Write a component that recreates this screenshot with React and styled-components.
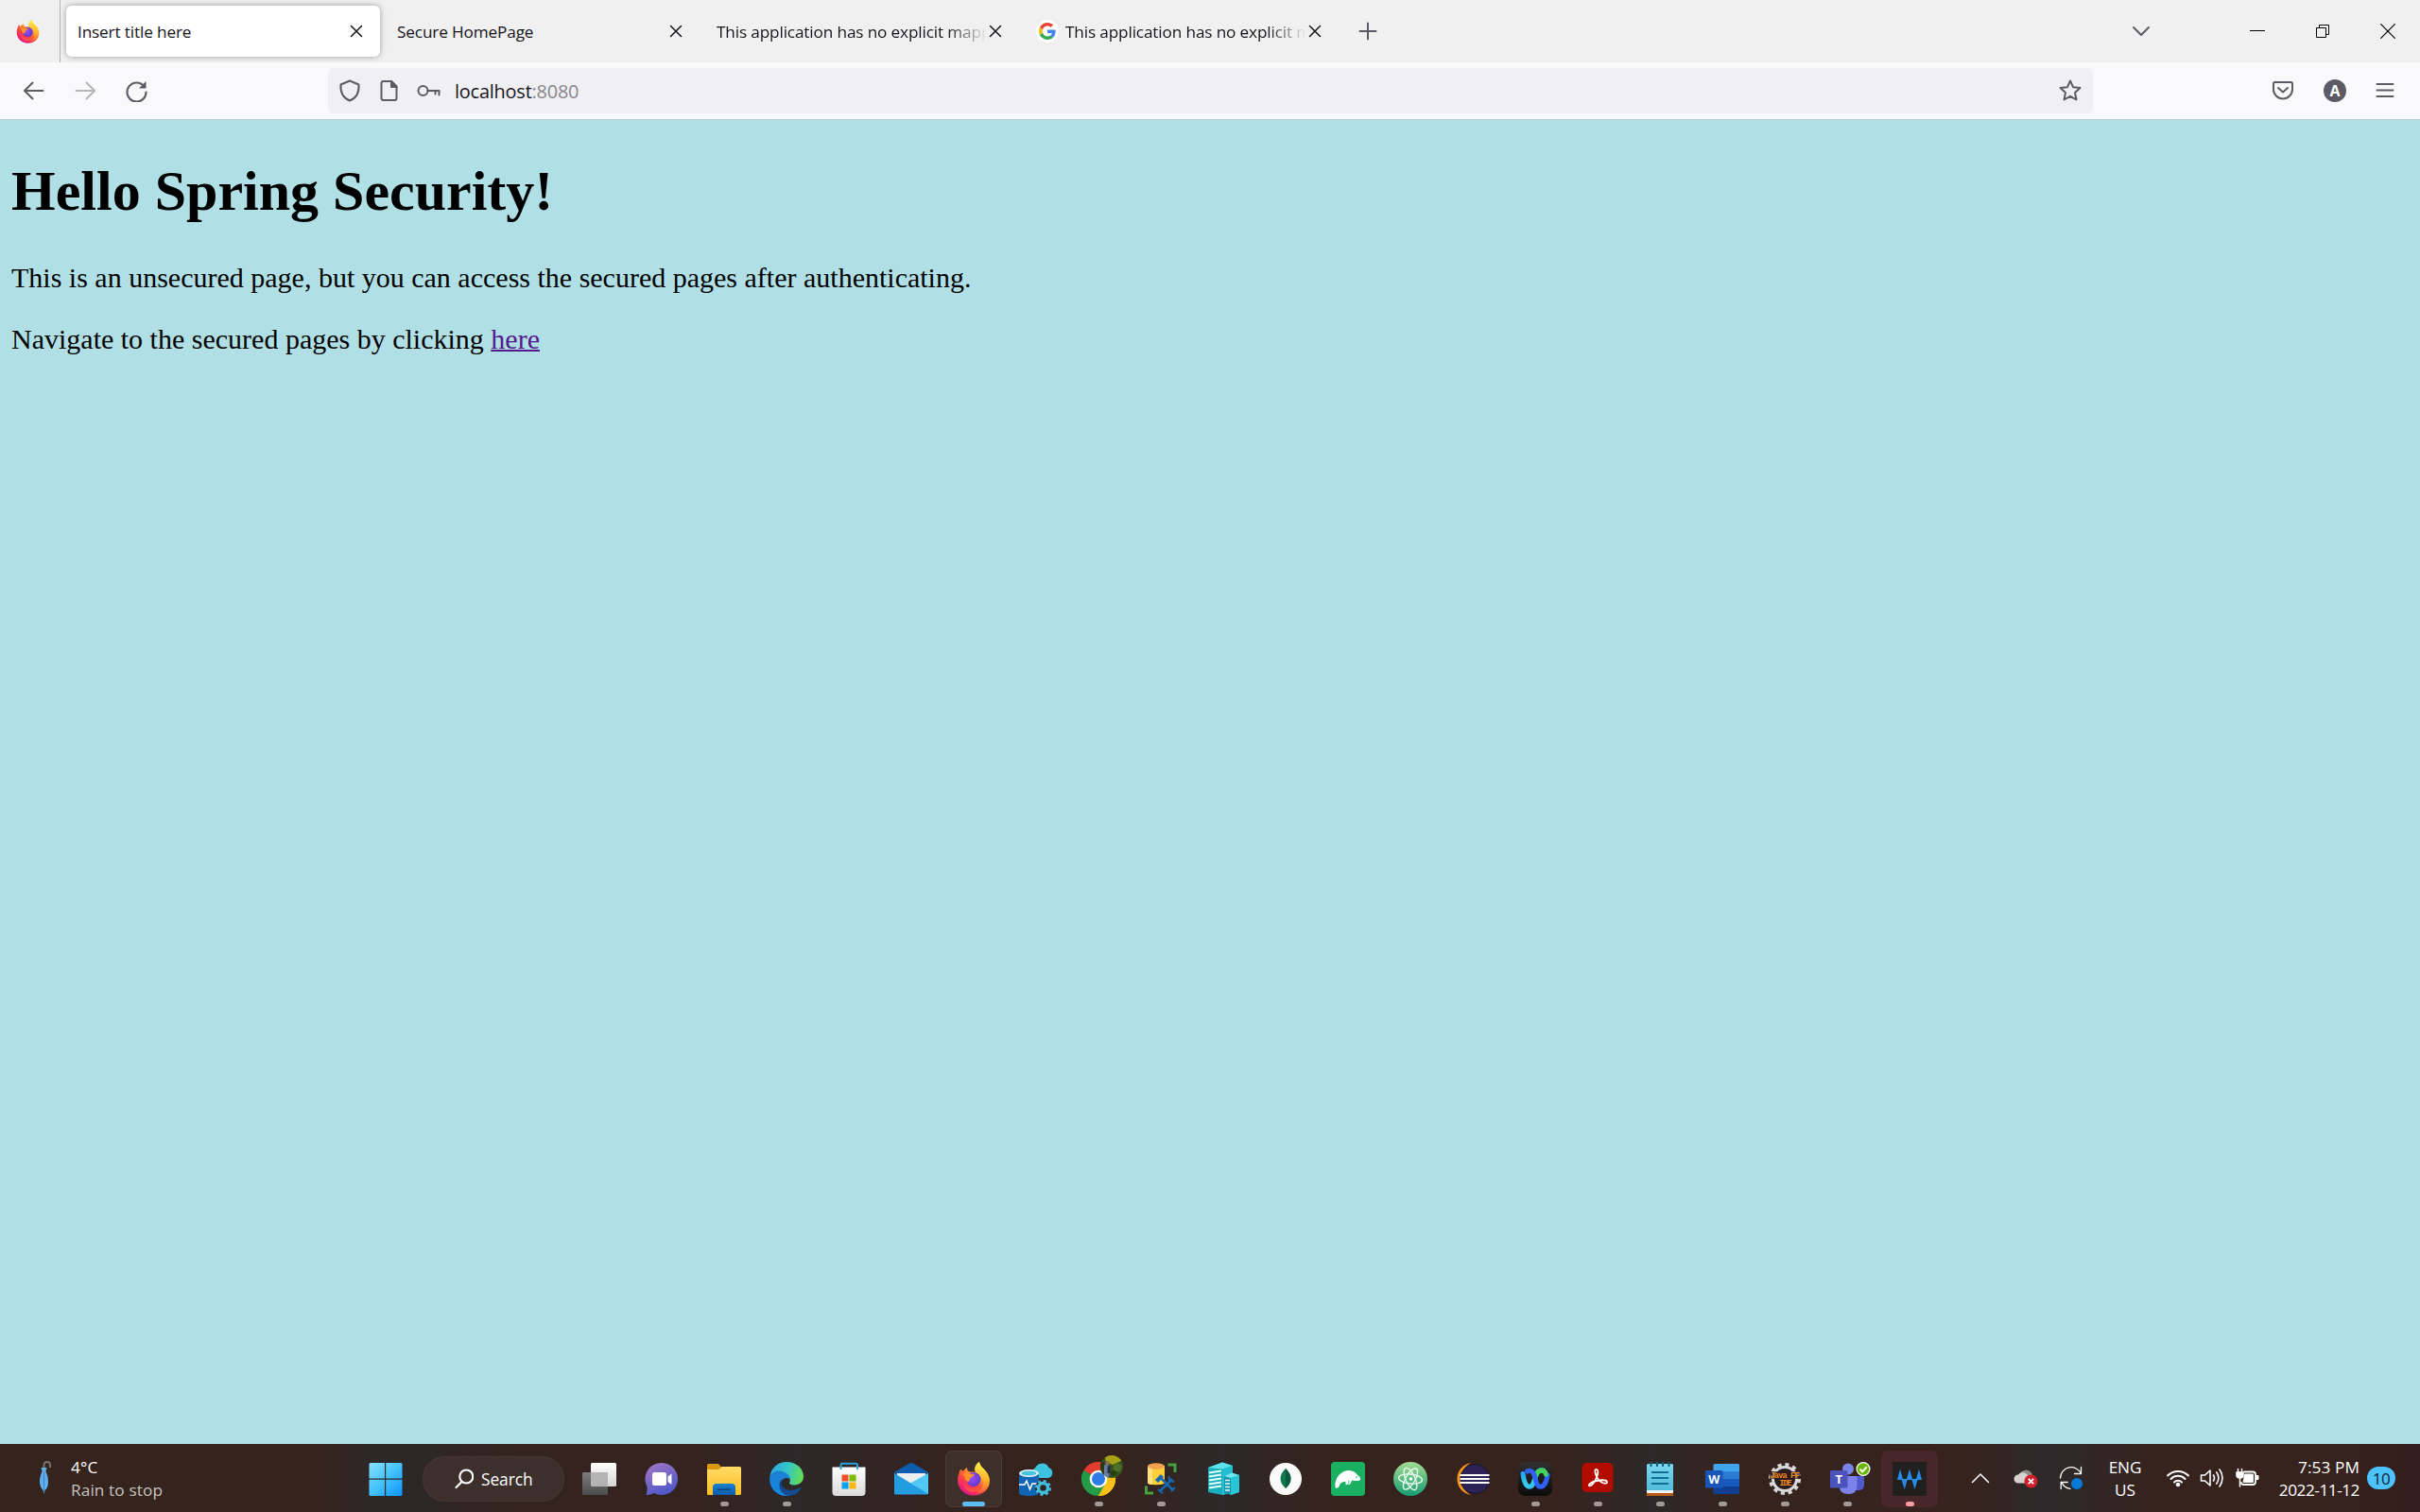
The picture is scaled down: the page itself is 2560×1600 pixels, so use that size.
import React from "react";
import styled, { createGlobalStyle } from "styled-components";

const Global = createGlobalStyle`
  html, body { margin: 0; padding: 0; }
  body { width: 2560px; height: 1600px; overflow: hidden; background: #b0e0e6; }
  svg { display: block; flex: none; }
`;

const ui = `"Open Sans", "Noto Sans", sans-serif`;

const Screen = styled.div`
  width: 2560px;
  height: 1600px;
  display: flex;
  flex-direction: column;
  font-family: ${ui};
`;

/* ---------- browser chrome ---------- */
const TabStrip = styled.div`
  height: 66px;
  background: #f0f0f0;
  display: flex;
  align-items: center;
`;
const ViewButton = styled.div`
  box-sizing: border-box;
  width: 64px;
  height: 66px;
  padding-left: 17px;
  display: flex;
  align-items: center;
  border-right: 1px solid #b3b3b3;
  margin-right: 6px;
`;
const Tab = styled.div`
  box-sizing: border-box;
  width: 332px;
  height: 54px;
  margin-right: 6px;
  padding: 0 16px 0 12px;
  border-radius: 6px;
  display: flex;
  align-items: center;
  background: ${(p) => (p.$active ? "#fff" : "transparent")};
  box-shadow: ${(p) => (p.$active ? "0 0 6px rgba(90,90,90,.55)" : "none")};
`;
const TabTitle = styled.span`
  flex: 1;
  min-width: 0;
  overflow: hidden;
  white-space: nowrap;
  font-size: 17.2px;
  letter-spacing: -0.14px;
  line-height: 26px;
  padding-top: 2px;
  color: #15141a;
  margin-left: ${(p) => (p.$icon ? "7px" : "0")};
  mask-image: ${(p) => (p.$fade ? "linear-gradient(to left, transparent 0, #000 42px)" : "none")};
`;
const TabClose = styled.div`
  width: 18px;
  display: flex;
  justify-content: center;
`;
const NewTab = styled.div`
  width: 60px;
  display: flex;
  justify-content: center;
  margin-left: -5px;
`;
const WindowButtons = styled.div`
  margin-left: auto;
  display: flex;
  align-items: center;
`;
const WindowButton = styled.div`
  width: ${(p) => p.$w}px;
  margin-right: ${(p) => p.$gap || 0}px;
  display: flex;
  justify-content: center;
`;

const NavBar = styled.div`
  box-sizing: border-box;
  height: 61px;
  background: #f9f9fb;
  border-bottom: 1px solid #bccdd2;
  display: flex;
  align-items: center;
`;
const NavGroup = styled.div`
  display: flex;
  align-items: center;
  width: 347px;
  gap: 30px;
  box-sizing: border-box;
  padding-left: 24px;
`;
const UrlBar = styled.div`
  box-sizing: border-box;
  width: 1867px;
  height: 48px;
  padding: 0 12px 0 11px;
  border-radius: 6px;
  background: #f0f0f4;
  display: flex;
  align-items: center;
`;
const UrlIcons = styled.div`
  display: flex;
  align-items: center;
  gap: 19px;
  margin-right: 15px;
`;
const UrlText = styled.span`
  flex: 1;
  font-size: 19.9px;
  letter-spacing: -0.2px;
  line-height: 30px;
  padding-top: 2px;
  color: #15141a;
`;
const Port = styled.span`
  color: #87868c;
`;
const NavActions = styled.div`
  margin-left: auto;
  display: flex;
  align-items: center;
  gap: 31px;
  padding-right: 27px;
`;
const Avatar = styled.div`
  width: 24px;
  height: 24px;
  border-radius: 50%;
  background: #5b5b66;
  color: #fff;
  font: 700 16px/25px ${ui};
  text-align: center;
`;

/* ---------- page ---------- */
const Page = styled.main`
  flex: 1;
  background: #b0e0e6;
  padding: 0 12px;
  display: flow-root;
  font-family: "Liberation Serif", "Times New Roman", serif;
  font-size: 30px;
  line-height: 35px;
  color: #000;
`;
const Heading = styled.h1`
  margin: 41px 0 39px;
  font-size: 60px;
  line-height: 69px;
  font-weight: 700;
`;
const Paragraph = styled.p`
  margin: 30px 0;
`;
const Link = styled.a`
  color: #551a8b;
  text-decoration: underline;
  text-decoration-thickness: 1.5px;
`;

/* ---------- taskbar ---------- */
const TaskBar = styled.footer`
  height: 72px;
  display: flex;
  align-items: center;
  color: #fff;
  background: linear-gradient(
    90deg,
    #35231c 0, #35231e 340px, #2b2828 400px, #2d2727 450px, #34231f 540px,
    #34221e 740px, #2d2829 840px, #34221e 1000px, #36231d 1180px, #2d2829 1290px,
    #36221d 1410px, #37231d 1640px, #2d2829 1750px, #37231d 1850px, #37231d 2080px,
    #2d292b 2160px, #37231d 2290px, #36231e 2460px, #351d1d 2560px
  );
`;
const Weather = styled.div`
  box-sizing: border-box;
  width: 375px;
  padding-left: 39px;
  display: flex;
  align-items: center;
  gap: 20px;
`;
const Lines = styled.div`
  display: flex;
  flex-direction: column;
  align-items: ${(p) => p.$align || "flex-start"};
  padding-top: 2px;
  font-size: 17.2px;
  line-height: 24px;
  letter-spacing: ${(p) => p.$spacing || "-0.1px"};
  width: ${(p) => p.$w || "auto"};
  white-space: nowrap;
`;
const Muted = styled.span`
  color: #c9c3c1;
`;
const ClockDate = styled.span`
  letter-spacing: -0.45px;
`;
const Cell = styled.div`
  box-sizing: border-box;
  width: 60px;
  height: 60px;
  margin: 2px 3px 0;
  padding-top: 12px;
  border-radius: 7px;
  display: flex;
  flex-direction: column;
  align-items: center;
  background: ${(p) => (p.$tone === "active" ? "#3f2f2b" : p.$tone === "alert" ? "#48262a" : "transparent")};
  box-shadow: ${(p) => (p.$tone === "active" ? "inset 0 0 0 1px #4b3a36" : "none")};
`;
const Dot = styled.div`
  width: ${(p) => (p.$tone === "active" ? 24 : 9)}px;
  height: 5px;
  margin-top: 6px;
  border-radius: 3px;
  background: ${(p) => (p.$tone === "active" ? "#5cbcf5" : p.$tone === "alert" ? "#ff9ba6" : "#a39a97")};
`;
const SearchPill = styled.div`
  box-sizing: border-box;
  width: 150px;
  height: 48px;
  margin: 2px 4px 0 6px;
  padding-left: 34px;
  border-radius: 24px;
  display: flex;
  align-items: center;
  gap: 8px;
  background: #3d2f2c;
  box-shadow: inset 0 0 0 1px #453733;
  font-size: 17.4px;
  letter-spacing: -0.1px;
`;
const Tray = styled.div`
  display: flex;
  align-items: center;
  margin-left: auto;
  padding-right: 26px;
`;
const TrayItem = styled.div`
  width: ${(p) => p.$w}px;
  margin-right: ${(p) => p.$gap || 0}px;
  display: flex;
  justify-content: center;
`;
const Badge = styled.div`
  width: 30px;
  height: 24px;
  margin-left: 8px;
  border-radius: 12px;
  background: #4cc2ff;
  color: #10222d;
  font-size: 17px;
  letter-spacing: -0.4px;
  line-height: 25px;
  text-align: center;
`;

/* ---------- line icons ---------- */
const Line = ({ w = 24, h = 24, c = "#5b5b66", s = 2, children }) => (
  <svg width={w} height={h} viewBox={`0 0 ${w} ${h}`} fill="none" stroke={c} strokeWidth={s} strokeLinecap="round" strokeLinejoin="round">
    {children}
  </svg>
);
const Cross = () => (
  <Line w={14} h={14} c="#15141a" s={1.5}><path d="M1.500 1.500l11 11M12.500 1.500l-11 11" /></Line>
);

const FirefoxLogo = ({ size = 36, id }) => (
  <svg width={size} height={size} viewBox="0 0 36 36">
    <defs>
      <linearGradient id={id + "a"} x1=".85" y1=".05" x2=".25" y2=".95">
        <stop offset="0" stopColor="#fff44f" /><stop offset=".35" stopColor="#ffa32c" />
        <stop offset=".65" stopColor="#ff4a3d" /><stop offset="1" stopColor="#e31587" />
      </linearGradient>
      <linearGradient id={id + "c"} x1=".5" y1="0" x2=".5" y2="1">
        <stop offset="0" stopColor="#fff34a" /><stop offset=".6" stopColor="#ffb52b" /><stop offset="1" stopColor="#ff6a35" />
      </linearGradient>
      <radialGradient id={id + "b"} cx=".4" cy=".4" r=".7">
        <stop offset="0" stopColor="#9a4ff5" /><stop offset="1" stopColor="#5a34c6" />
      </radialGradient>
    </defs>
    <path d="M4 8c1 0 2 1 3 2 1-2 2.500-3 4-4 0 2 .8 3.500 2.500 4.500H20C19 6 20.500 2 24 0c.6 4.500 4 6 6.500 9.500C33 12 35 16 35 20c0 9-7.500 15.500-17 15.500S1 28.500 1 19.500C1 15 2.500 11 4 8z" fill={`url(#${id}a)`} />
    <path d="M19 9C18.500 5.500 20.500 2 24 0c.6 4.500 4 6 6.500 9.500 5 6 5 14 .5 19.500-3 3.500-7 4-10 3 6-3 8-8 6-13-1.500-4-5-6-8-10z" fill={`url(#${id}c)`} opacity=".8" />
    <circle cx="18" cy="18.500" r="7.500" fill={`url(#${id}b)`} />
    <path d="M6 13c3-2 6-2 8-.5 2 .3 4 .3 5 .5-.5 2-3 2.500-4.500 4-1 1 0 2.500-1.500 3.500-2 1-3-1-4-2.500-.5-2-1-4-3-5z" fill="#ff9328" />
    <path d="M7 20c1 7 8 9.500 13 7.500 3-1.200 4.500-2.500 5.500-5 .5 6-4 10-9.500 9.500-5.500-.4-9-5-9-12z" fill="#ff5b3b" opacity=".7" />
  </svg>
);

const GoogleLogo = () => (
  <svg width="24" height="24" viewBox="0 0 24 24">
    <circle cx="12" cy="12" r="12" fill="#fff" />
    <g transform="translate(3 3) scale(.375)">
      <path fill="#EA4335" d="M24 9.500c3.540 0 6.710 1.220 9.210 3.600l6.850-6.850C35.900 2.380 30.470 0 24 0 14.620 0 6.510 5.380 2.560 13.220l7.980 6.190C12.430 13.720 17.740 9.500 24 9.500z" />
      <path fill="#4285F4" d="M46.980 24.550c0-1.570-.15-3.090-.38-4.550H24v9.020h12.940c-.58 2.960-2.260 5.480-4.780 7.180l7.730 6c4.510-4.180 7.090-10.360 7.090-17.650z" />
      <path fill="#FBBC05" d="M10.530 28.590c-.48-1.450-.76-2.990-.76-4.590s.27-3.140.76-4.590l-7.980-6.190C.92 16.460 0 20.120 0 24s.92 7.540 2.560 10.780l7.970-6.190z" />
      <path fill="#34A853" d="M24 48c6.480 0 11.930-2.130 15.890-5.810l-7.730-6c-2.150 1.450-4.920 2.300-8.160 2.300-6.260 0-11.570-4.220-13.470-9.910l-7.980 6.190C6.510 42.620 14.620 48 24 48z" />
    </g>
  </svg>
);

/* ---------- taskbar icons ---------- */
const Icon = ({ children }) => <svg width="36" height="36" viewBox="0 0 36 36">{children}</svg>;
const Grad = ({ id, from, to, x2 = 0, y2 = 1 }) => (
  <linearGradient id={id} x1="0" y1="0" x2={x2} y2={y2}>
    <stop offset="0" stopColor={from} /><stop offset="1" stopColor={to} />
  </linearGradient>
);

const StartIcon = () => (
  <Icon>
    <defs><linearGradient id="win" gradientUnits="userSpaceOnUse" x1="0" y1="0" x2="36" y2="36">
      <stop offset="0" stopColor="#8be2ff" /><stop offset=".5" stopColor="#45c3fb" /><stop offset="1" stopColor="#0a93ff" />
    </linearGradient></defs>
    <path fill="url(#win)" d="M2 1h15v16.500H.5V2.500Q.5 1 2 1zM18.200 1H34q1.500 0 1.500 1.500v15H18.200zM.5 18.700H17V36H2q-1.500 0-1.500-1.500zM18.200 18.700h17.300v15.800Q35.500 36 34 36H18.200z" />
  </Icon>
);
const TaskViewIcon = () => (
  <Icon>
    <defs><Grad id="tv1" from="#fff" to="#d5d5d5" /><Grad id="tv2" from="#7d7c7c" to="#4c4c4c" /></defs>
    <rect x="9" y="1" width="27" height="25" rx="1.500" fill="url(#tv1)" />
    <rect x="0" y="11" width="27" height="24" rx="1.500" fill="url(#tv2)" />
    <path d="M9 11h18v15H10.500Q9 26 9 24.500z" fill="#b5b4b4" />
  </Icon>
);
const ChatIcon = () => (
  <Icon>
    <defs><Grad id="chat" from="#a778c4" to="#5059c9" x2={0.5} /></defs>
    <path d="M18 1a17 17 0 1 1-8 32c-3 1.500-6 2-8.500 2C1.500 34.500 3 31 2.500 26A17 17 0 0 1 18 1z" fill="url(#chat)" />
    <rect x="8" y="11" width="15" height="14" rx="2.500" fill="#fff" /><path d="M24.500 15.500l4-3v11.500l-4-3z" fill="#fff" />
  </Icon>
);
const ExplorerIcon = () => (
  <Icon>
    <defs><Grad id="fold" from="#ffdc66" to="#fbbf24" /><Grad id="foldb" from="#1a80cf" to="#0c5da8" /></defs>
    <path d="M0 3.500Q0 2 1.500 2h10.500l3 3.500-3 3.500H0z" fill="#d99a11" />
    <path d="M0 8h12l3.500-3H34.500Q36 5 36 6.500V33.500Q36 35 34.500 35H1.500Q0 35 0 33.500z" fill="url(#fold)" />
    <path d="M6 35V27q0-4 4-4h16q4 0 4 4v8z" fill="url(#foldb)" /><rect x="11" y="28.500" width="14" height="1.500" rx=".75" fill="#0a467e" />
  </Icon>
);
const EdgeIcon = () => (
  <Icon>
    <defs>
      <linearGradient id="e1" x1="0" y1=".3" x2="1" y2=".5"><stop offset="0" stopColor="#2aa5df" /><stop offset=".5" stopColor="#33c6c8" /><stop offset="1" stopColor="#64dd52" /></linearGradient>
      <Grad id="e2" from="#1c7fd0" to="#1389e4" /><Grad id="e3" from="#173f7b" to="#144f96" />
    </defs>
    <path d="M.5 15C2 6 9 0 18 0c10.500 0 18 7 18 15.500 0 5.500-4.500 9-9.500 9-4 0-6.500-1.500-5-3.500C23 18.500 20 12 12 11 7 10.500 2.500 12 .5 15z" fill="url(#e1)" />
    <path d="M.2 16C3 9.500 10 8.500 15 10.500c4 1.500 7 4.500 7 8-5-4-10.500 0-10 6 .3 5 5 9.500 10 11C10 38-1 29 .2 16z" fill="url(#e2)" />
    <path d="M13 18c-2.500 8 4.500 13.500 13 11.500 3-.7 5-1.500 7-2.500.8 0 1 .5.500 1.300C30 33.500 24 36.500 18 35.500 10 32 8.500 23 13 18z" fill="url(#e3)" />
  </Icon>
);
const StoreIcon = () => (
  <Icon>
    <defs><Grad id="st" from="#fff" to="#dadada" /></defs>
    <path d="M.5 5.500h35V32q0 4-4 4h-27q-4 0-4-4z" fill="url(#st)" />
    <path d="M9.500 8V3Q9.500 1.700 11 1.700H25.500q1.500 0 1.500 1.300V8" fill="none" stroke="#27a4dc" strokeWidth="2" />
    <path d="M10.500 13.500H17.500V20.500H10.500z" fill="#f0502a" /><path d="M18.500 13.500h7v7h-7z" fill="#7eb900" /><path d="M10.500 21.500h7v7h-7z" fill="#00a2ed" /><path d="M18.500 21.500h7v7h-7z" fill="#fdb80f" />
  </Icon>
);
const MailIcon = () => (
  <Icon>
    <path d="M0 11L16.500 1.300q1.500-.8 3 0L36 11v4H0z" fill="#0d5cad" />
    <path d="M3 12h30v12L18 27 3 24z" fill="#eee" /><path d="M0 12L36 33.500Q35.500 34.500 34 34.500H1.500Q0 34.500 0 33z" fill="#249ce2" /><path d="M36 12L17 22.500 36 34z" fill="#50c8f5" />
  </Icon>
);
const AzureDbIcon = () => (
  <Icon>
    <path d="M18 17a5.500 5.500 0 0 1-1-10.500A8 8 0 0 1 31.500 6 5.800 5.800 0 0 1 31 17z" fill="#3cc3e0" />
    <path d="M0 12v21c0 4 21 4 21 0V12z" fill="#1165b5" /><ellipse cx="10.500" cy="12" rx="10.500" ry="4" fill="#e6f3f7" /><ellipse cx="10.500" cy="12" rx="8" ry="2.500" fill="#45c4e0" />
    <path d="M0 24h6l2-4 3.500 9 2.500-6h6" fill="none" stroke="#fff" strokeWidth="1.500" />
    <circle cx="25.500" cy="27.500" r="8.500" fill="#322321" /><circle cx="25.500" cy="27.500" r="5" fill="none" stroke="#42bdde" strokeWidth="3.500" />
    <circle cx="25.500" cy="27.500" r="7.300" fill="none" stroke="#42bdde" strokeWidth="2.500" strokeDasharray="3 2.730" />
  </Icon>
);
const ChromeIcon = () => (
  <svg width="36" height="36" viewBox="0 0 36 36" overflow="visible">
    <path d="M18 18L2.400 9A18 18 0 0 1 33.600 9z" fill="#e33b2e" /><path d="M18 18L2.400 9A18 18 0 0 0 18 36l8-13.500z" fill="#259b48" />
    <path d="M18 18V9h15.600A18 18 0 0 1 18 36z" fill="#fbc116" /><path d="M18 18L10.500 22 18 36l7.800-13.500z" fill="#259b48" />
    <path d="M18 36l7.800-13.500V15L36 18A18 18 0 0 1 18 36z" fill="#fbc116" />
    <circle cx="18" cy="18" r="9.300" fill="#fff" /><circle cx="18" cy="18" r="7" fill="#2f7be6" />
    <clipPath id="ava"><circle cx="32" cy="5" r="12" /></clipPath>
    <g clipPath="url(#ava)">
      <path d="M20-7h24v24H20z" fill="#31521d" /><path d="M24-7h18v6l-9 4-7-3z" fill="#a9a116" /><circle cx="38" cy="6" r="4.500" fill="#4d7125" />
      <circle cx="34" cy="12" r="3" fill="#23400f" /><path d="M20 0h4v17h-4z" fill="#263a19" /><path d="M24 4q4-4 6 1l-1 12h-5z" fill="#6b7d9e" />
      <circle cx="27.500" cy="1" r="2.200" fill="#8d6c60" /><path d="M27.500 4h3v8h-3z" fill="#292d46" />
    </g>
  </svg>
);
const SqlToolsIcon = () => (
  <Icon>
    <path d="M4 4v18c0 3 18 3 18 0V4z" fill="#fbcf37" /><path d="M4 4v18c0 1 2 2 5 2V5z" fill="#ffe180" /><ellipse cx="13" cy="4.500" rx="9" ry="3.200" fill="#f1a04d" />
    <path d="M25.500 3H33v8M2.500 25.500V33H10" fill="none" stroke="#46a03c" strokeWidth="3" />
    <path d="M17 16l14 14M30 18L17 31" stroke="#1569b2" strokeWidth="2.600" /><path d="M13.500 20.500l6-6" stroke="#1569b2" strokeWidth="4.500" /><path d="M27 15q-2 5 5 6M15 29l5 4M29 31l4-4" stroke="#1569b2" strokeWidth="2" fill="none" />
  </Icon>
);
const ServersIcon = () => (
  <Icon>
    <path d="M2 6L17 .5 28 4v28l-11 3-15-3z" fill="#19aebc" /><path d="M2 6L17 .5 28 4l-11 3.500z" fill="#5ee3ed" /><path d="M17 7.500L28 4v28l-11 3z" fill="#22bfd0" />
    <path d="M3 11.500l13-2M3 15.500l13-2M3 19.500l13-2M3 23.500l13-2M3 27.500l13-2" stroke="#e6ffff" strokeWidth="1.900" />
    <path d="M19 15l8-3.500 8 2.500v18l-9 3-7-2z" fill="#1396ae" /><path d="M19 15l8-3.500 8 2.500-9 3z" fill="#70e7ef" /><path d="M26 17l9-3v18l-9 3z" fill="#28c7d8" />
    <path d="M20 19.500h5M20 23h5M20 26.500h5M20 30h5" stroke="#e6ffff" strokeWidth="1.600" />
  </Icon>
);
const MongoIcon = () => (
  <Icon><circle cx="18" cy="18" r="17" fill="#fafafa" /><path d="M18 7c4 4 5.500 7 5.500 11S21 25 18 28c-3-3-5.500-6-5.500-10S14 11 18 7z" fill="#10774e" /><path d="M18 7c4 4 5.500 7 5.500 11S21 25 18 28z" fill="#0a5b3e" /></Icon>
);
const ManateeIcon = () => (
  <Icon>
    <rect width="36" height="36" rx="4" fill="#1ab062" />
    <path d="M4.500 26.500c-.8-5 1.500-11 6-14.500C15 8 22 8 26 11.500c1.200 1.200 1.700 2.500 3 3.300 1.700 1 2.700 2.700 2 4-.8 1.500-3 1.200-5 1.200l-4-.5c-.5 2-1.500 4-3 4.700-.8.2-1-.4-.7-1.200-.7 1-2 1.600-2.800 1.200.3-1.500 0-2.700-.5-3.400-2 .2-4 .9-5.500 2.700-.5 2-1.500 4-3.500 4.300-.9.100-1.400-.5-1.500-1.300z" fill="#fff" />
    <circle cx="27" cy="16" r=".8" fill="#1ab062" />
    <path d="M18.500 19.500c.5 1.500.3 3-.3 4" fill="none" stroke="#1ab062" strokeWidth=".9" />
  </Icon>
);
const AtomIcon = () => (
  <Icon><defs><Grad id="atom" from="#a4db92" to="#159e71" /></defs><circle cx="18" cy="18" r="18" fill="url(#atom)" />
    <g fill="none" stroke="#eafaf0" strokeWidth="1.400"><ellipse cx="18" cy="18" rx="12.500" ry="5" transform="rotate(6 18 18)" /><ellipse cx="18" cy="18" rx="12.500" ry="5" transform="rotate(66 18 18)" /><ellipse cx="18" cy="18" rx="12.500" ry="5" transform="rotate(120 18 18)" /></g>
    <circle cx="18.500" cy="18" r="1.800" fill="#fff" /></Icon>
);
const EclipseIcon = () => (
  <Icon><path d="M16 1A17.200 17.200 0 0 0 16 35C9 31 6 25 6 18S9 5 16 1z" fill="#f7941e" /><circle cx="20.300" cy="18" r="15.500" fill="#2c2255" stroke="#17142e" />
    <path d="M4.500 14h31M4.500 18h31M4.500 22h31" stroke="#fff" strokeWidth="1.900" /></Icon>
);
const WebexIcon = () => (
  <Icon>
    <defs>
      <Grad id="wx" from="#303030" to="#0b0b0b" />
      <linearGradient id="wl" gradientUnits="userSpaceOnUse" x1="3" y1="9" x2="20" y2="27"><stop offset="0" stopColor="#1d9bf5" /><stop offset=".6" stopColor="#35cdea" /><stop offset="1" stopColor="#2fb4ee" /></linearGradient>
    </defs>
    <rect width="36" height="36" rx="7" fill="url(#wx)" />
    <path d="M5 12.500C6 21 8.500 26.200 12 26.200c4.500 0 5-8 7.500-13.500C21 9.500 24 8.500 26.500 9" fill="none" stroke="url(#wl)" strokeWidth="5" strokeLinecap="round" />
    <path d="M19.500 12.800C21 9.500 24 8.300 27 9.500c1.500.7 2 2 2.200 3.200" fill="none" stroke="#45d25b" strokeWidth="5" strokeLinecap="round" />
    <path d="M9.500 10c3-1.800 6-.5 7.500 4 1.800 5.500 2.500 12.200 6.500 12.200 4.500 0 6.500-6 7.500-12.200" fill="none" stroke="#2f62fb" strokeWidth="5" strokeLinecap="round" />
    <path d="M23 9.500c3-1 6 .5 6.500 4" fill="none" stroke="#45d25b" strokeWidth="4.600" strokeLinecap="round" />
  </Icon>
);
const AcrobatIcon = () => (
  <Icon><rect x="1.500" y="1" width="33" height="31" rx="5" fill="#b30b00" />
    <path d="M17 8c-2-.5-2 2-1 5 1 3.500 4 7.500 7 9 3 1.200 5.500.5 5-1-.5-1.300-4-2-8-1.500s-8 1.800-10 3.500c-2 1.500-1 3 1 2 2.500-1.500 5-6 6.500-10 1-3.500 1.500-6.500-.5-7z" fill="none" stroke="#fff" strokeWidth="1.800" /></Icon>
);
const NotepadIcon = () => (
  <Icon><path d="M4 29h28v7H4z" fill="#b45a12" /><path d="M4 28h28v5H4z" fill="#f2f2f2" /><defs><Grad id="np" from="#7ed7ee" to="#4fbcdb" /></defs><path d="M4 3.500Q4 2 5.500 2h25Q32 2 32 3.500V30H4z" fill="url(#np)" />
    <path d="M9 11h18M9 17h18M9 23h18" stroke="#136e95" strokeWidth="1.800" /><path d="M8.500 1v3M15 1v3M21 1v3M27.500 1v3" stroke="#115f80" strokeWidth="2.200" strokeLinecap="round" /></Icon>
);
const letter = { fontFamily: "Open Sans", fontWeight: 700, fill: "#fff", textAnchor: "middle" };
const WordIcon = () => (
  <Icon><path d="M8.500 10V3.500Q8.500 2 10 2H34.500Q36 2 36 3.500V10z" fill="#41a5ee" /><path d="M8.500 10H36v8H8.500z" fill="#2b7cd3" /><path d="M8.500 18H36v8H8.500z" fill="#185abd" /><path d="M8.500 26H36v6.500Q36 34 34.500 34H10Q8.500 34 8.500 32.500z" fill="#103f91" />
    <rect x="0" y="9" width="18.500" height="18.500" rx="1.500" fill="#1a56b9" /><text x="9.200" y="22.700" fontSize="12.500" {...letter}>W</text></Icon>
);
const JavaIcon = () => (
  <Icon><circle cx="18" cy="18" r="15" fill="none" stroke="#d8d8d8" strokeWidth="4" strokeDasharray="4 3.850" /><circle cx="18" cy="18" r="12.500" fill="#2b1d1d" stroke="#d8d8d8" strokeWidth="3" />
    <rect x="2" y="10" width="32" height="8" fill="#2b1d1d" opacity=".7" />
    <g fontFamily="Liberation Mono" fontWeight="700" fill="#f28a1c" textAnchor="middle" fontSize="8.500"><text x="18" y="17" textLength="31">Java FF</text><text x="19" y="25" textLength="13">IDE</text></g></Icon>
);
const TeamsIcon = () => (
  <svg width="36" height="36" viewBox="0 0 36 36" overflow="visible">
    <circle cx="19" cy="7.500" r="6" fill="#7b83eb" /><path d="M26 15h8q2 0 2 2v7q0 6-6 6h-4z" fill="#5059c9" /><path d="M10 15h17q1.500 0 1.500 1.500V25q0 9-9.200 9T10 26z" fill="#7b83eb" />
    <rect x="0" y="9" width="18.500" height="18.500" rx="1.500" fill="#4b53bc" /><text x="9.200" y="22.900" fontSize="13" {...letter}>T</text>
    <circle cx="35" cy="7.500" r="7.500" fill="#fff" /><circle cx="35" cy="7.500" r="6.200" fill="#6bb700" /><path d="M31.500 7.800l2.700 2.500 4.500-5" stroke="#fff" strokeWidth="2" fill="none" />
  </svg>
);
const WaveIcon = () => (
  <Icon>
    <rect width="36" height="36" fill="#221f1f" />
    <path d="M5 19L8 7.500 11 18H15L18 7.500 21 18H25L28 7.500 31 19H26.500L23.500 29 20.500 19H15.700L12.700 29 9.700 19z" fill="#248ce8" />
  </Icon>
);

const apps = [
  { I: TaskViewIcon }, { I: ChatIcon }, { I: ExplorerIcon, run: 1 }, { I: EdgeIcon, run: 1 }, { I: StoreIcon }, { I: MailIcon },
  { I: () => <FirefoxLogo id="fx" />, run: 1, tone: "active" }, { I: AzureDbIcon }, { I: ChromeIcon, run: 1 }, { I: SqlToolsIcon, run: 1 },
  { I: ServersIcon }, { I: MongoIcon }, { I: ManateeIcon }, { I: AtomIcon }, { I: EclipseIcon }, { I: WebexIcon, run: 1 },
  { I: AcrobatIcon, run: 1 }, { I: NotepadIcon, run: 1 }, { I: WordIcon, run: 1 }, { I: JavaIcon, run: 1 }, { I: TeamsIcon, run: 1 },
  { I: WaveIcon, run: 1, tone: "alert" },
];

const tabs = [
  { title: "Insert title here", active: true },
  { title: "Secure HomePage" },
  { title: "This application has no explicit mapping", fade: true },
  { title: "This application has no explicit mapping", fade: true, icon: true },
];

export default function App() {
  return (
    <Screen>
      <Global />
      <TabStrip>
        <ViewButton><FirefoxLogo size={25} id="fv" /></ViewButton>
        {tabs.map((t, i) => (
          <Tab key={i} $active={t.active}>
            {t.icon && <GoogleLogo />}
            <TabTitle $fade={t.fade} $icon={t.icon}>{t.title}</TabTitle>
            <TabClose><Cross /></TabClose>
          </Tab>
        ))}
        <NewTab><Line w={20} h={20}><path d="M10 1.500v17M1.500 10h17" /></Line></NewTab>
        <WindowButtons>
          <WindowButton $w={126} $gap={26}><Line w={20} h={12}><path d="M2 2l8 8 8-8" /></Line></WindowButton>
          <WindowButton $w={68}><Line w={16} h={16} c="#000" s={1}><path d="M.5 7.500h15" /></Line></WindowButton>
          <WindowButton $w={70}>
            <svg width="14" height="14" viewBox="0 0 14 14" fill="none" stroke="#000"><path d="M.5 3.500h10v10H.5zM3.500 3.500v-3h10v10h-3" /></svg>
          </WindowButton>
          <WindowButton $w={68}><Line w={16} h={16} c="#000" s={1.2}><path d="M.7.7l14.600 14.600M15.300.7L.7 15.300" /></Line></WindowButton>
        </WindowButtons>
      </TabStrip>

      <NavBar>
        <NavGroup>
          <Line><path d="M21.500 12H3M10.500 3.500L2 12l8.500 8.500" /></Line>
          <Line c="#b5b5ba"><path d="M2.500 12H21M13.500 3.500L22 12l-8.500 8.500" /></Line>
          <Line s={2.2}><path d="M20.500 7.500a10 10 0 1 0 2 6" /><path d="M22.500 2v7.500H15z" fill="#5b5b66" stroke="none" /></Line>
        </NavGroup>
        <UrlBar>
          <UrlIcons>
            <Line w={24}><path d="M12 1.500L21.500 5.500c.5 7-2 14-9.500 17C4.500 19.500 2 12.500 2.500 5.500z" /></Line>
            <Line w={20}><path d="M4.500 2h8.500L18.500 7.500V20q0 2-2 2H4.500q-2 0-2-2V4q0-2 2-2z" /><path d="M13 2v6h5.500z" fill="#5b5b66" /></Line>
            <Line w={26}><circle cx="7.500" cy="12" r="5" /><path d="M12.500 12H24.500v4.500M20.500 12v3.500" /></Line>
          </UrlIcons>
          <UrlText>localhost<Port>:8080</Port></UrlText>
          <Line w={24}><path d="M12 1.500l3 6.700 7.500.8-5.500 5 1.500 7.500-6.500-3.700-6.500 3.700L7 14 1.500 9 9 8.200z" /></Line>
        </UrlBar>
        <NavActions>
          <Line><path d="M3.500 3h17q1.500 0 1.500 1.500V10.500a10 10 0 0 1-20 0V4.500Q2 3 3.500 3z" /><path d="M7 9l5 4.500L17 9" /></Line>
          <Avatar>A</Avatar>
          <Line w={20}><path d="M1.500 5h17M1.500 11.500h17M1.500 18h17" /></Line>
        </NavActions>
      </NavBar>

      <Page>
        <Heading>Hello Spring Security!</Heading>
        <Paragraph>This is an unsecured page, but you can access the secured pages after authenticating.</Paragraph>
        <Paragraph>Navigate to the secured pages by clicking <Link>here</Link></Paragraph>
      </Page>

      <TaskBar>
        <Weather>
          <svg width="16" height="36" viewBox="0 0 16 36">
            <path d="M7.500 8V5q0-4 3.200-4T14 4v3" fill="none" stroke="#77706e" strokeWidth="2" />
            <path d="M4.500 7h6l-1 4q3 6 2.500 12T8.500 31L7.500 35 6.500 31Q3.500 28 3 23T5.500 11z" fill="#5faeea" /><path d="M7.500 11v22" stroke="#3585d2" />
          </svg>
          <Lines $spacing="0.12px"><span>4°C</span><Muted>Rain to stop</Muted></Lines>
        </Weather>
        <Cell><StartIcon /></Cell>
        <SearchPill>
          <Line w={20} h={22} c="#fff" s={2.2}><circle cx="12.300" cy="8.500" r="7" /><path d="M7.500 14L1.500 20" /></Line>
          <span>Search</span>
        </SearchPill>
        {apps.map(({ I, run, tone }, i) => (
          <Cell key={i} $tone={tone}><I />{run && <Dot $tone={tone} />}</Cell>
        ))}
        <Tray>
          <TrayItem $w={48}><Line w={20} h={12} c="#fff" s={1.5}><path d="M1.500 10.500L10 2l8.500 8.500" /></Line></TrayItem>
          <TrayItem $w={48}>
            <svg width="26" height="22" viewBox="0 0 26 22">
              <path d="M7 14a6 6 0 0 1 2-10A7 7 0 0 1 20 8v6z" fill="#8f8c8b" /><path d="M5 16.500a4.500 4.500 0 0 1 0-9 6 6 0 0 1 10 1v8z" fill="#d6d4d3" /><circle cx="18.500" cy="14.500" r="7" fill="#d21f2b" /><path d="M15.800 11.800l5.400 5.400M21.200 11.800l-5.400 5.400" stroke="#fff" strokeWidth="1.800" />
            </svg>
          </TrayItem>
          <TrayItem $w={48}>
            <Line w={26} h={26} c="#fff" s={1.3}><path d="M1.500 13A11.500 11.500 0 0 1 23.500 8.500M23.500 1.500v7H16.500M12 24.300A11 11 0 0 1 3 17.500M2.200 24.500V17.500h7" /><circle cx="19" cy="19" r="6" fill="#0a7ad8" stroke="none" /></Line>
          </TrayItem>
          <TrayItem $w={66} $gap={5}><Lines $align="center"><span>ENG</span><span>US</span></Lines></TrayItem>
          <TrayItem $w={36}>
            <Line w={26} h={24} c="#fff" s={2}><path d="M2 9.500a15.500 15.500 0 0 1 22 0M5.500 13a10.500 10.500 0 0 1 15 0M9 16.500a5.500 5.500 0 0 1 8 0" /><circle cx="13" cy="19" r="1.300" fill="#fff" /></Line>
          </TrayItem>
          <TrayItem $w={36}>
            <Line w={26} h={24} c="#fff" s={1.6}><path d="M1.500 9h4L11 4v16l-5.500-5h-4z" /><path d="M14.500 9q2 3 0 6M17.800 6q4.200 6 0 12M21 3q6 9 0 18" /></Line>
          </TrayItem>
          <TrayItem $w={37}>
            <Line w={26} h={24} c="#fff" s={1.8}><path d="M10 5.500h9q3 0 3 3V16q0 3-3 3H9.500q-2.500 0-2.500-2" /><path d="M23 9.500h2v4h-2z" fill="#fff" strokeWidth="1" /><path d="M11 8.500h8v7.500H9.500z" fill="#fff" /><path d="M2 6h7v3q0 3-3.500 3T2 9zM3.500 2.500V6M7.500 2.500V6M5.500 12v9" fill="#fff" strokeWidth="1.500" /></Line>
          </TrayItem>
          <Lines $align="flex-end" $w="101px" $spacing="0.1px"><span>7:53 PM</span><ClockDate>2022-11-12</ClockDate></Lines>
          <Badge>10</Badge>
        </Tray>
      </TaskBar>
    </Screen>
  );
}
